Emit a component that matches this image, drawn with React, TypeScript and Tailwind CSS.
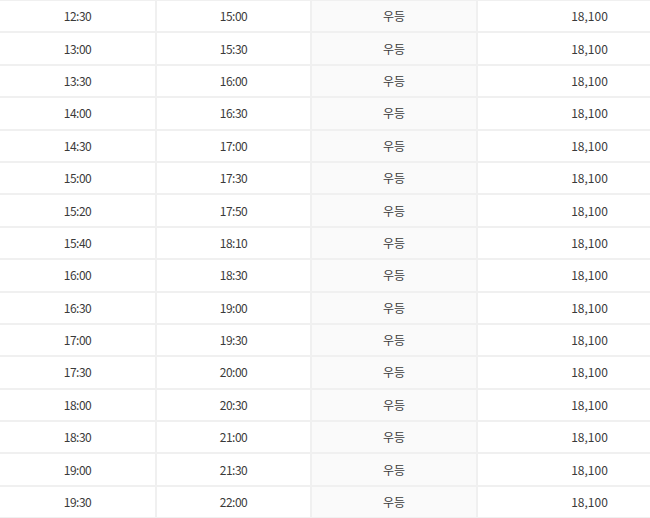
const rows: [string, string][] = [
  ["12:30", "15:00"],
  ["13:00", "15:30"],
  ["13:30", "16:00"],
  ["14:00", "16:30"],
  ["14:30", "17:00"],
  ["15:00", "17:30"],
  ["15:20", "17:50"],
  ["15:40", "18:10"],
  ["16:00", "18:30"],
  ["16:30", "19:00"],
  ["17:00", "19:30"],
  ["17:30", "20:00"],
  ["18:00", "20:30"],
  ["18:30", "21:00"],
  ["19:00", "21:30"],
  ["19:30", "22:00"],
]

export default function App() {
  return (
    <div className="w-[650px] h-[518px] overflow-hidden bg-white font-['Noto_Sans_CJK_KR','Noto_Sans',sans-serif] text-[12px] text-[#3a3a3a]">
      <div className="w-[701px] border-t border-[#f0f0f0]">
        {rows.map(([dep, arr], i) => (
          <div
            key={i}
            className="grid grid-cols-[157px_155px_166px_1fr] h-[32.4px] border-b-2 border-[#f0f0f0] leading-none"
          >
            <div className="flex items-center justify-center border-r-2 border-[#f0f0f0] tracking-[-0.5px]">{dep}</div>
            <div className="flex items-center justify-center border-r-2 border-[#f0f0f0] tracking-[-0.5px]">{arr}</div>
            <div className="flex items-center justify-center border-r-2 border-[#f0f0f0] bg-[#fafafa]">우등</div>
            <div className="flex items-center justify-center">18,100</div>
          </div>
        ))}
      </div>
    </div>
  )
}
